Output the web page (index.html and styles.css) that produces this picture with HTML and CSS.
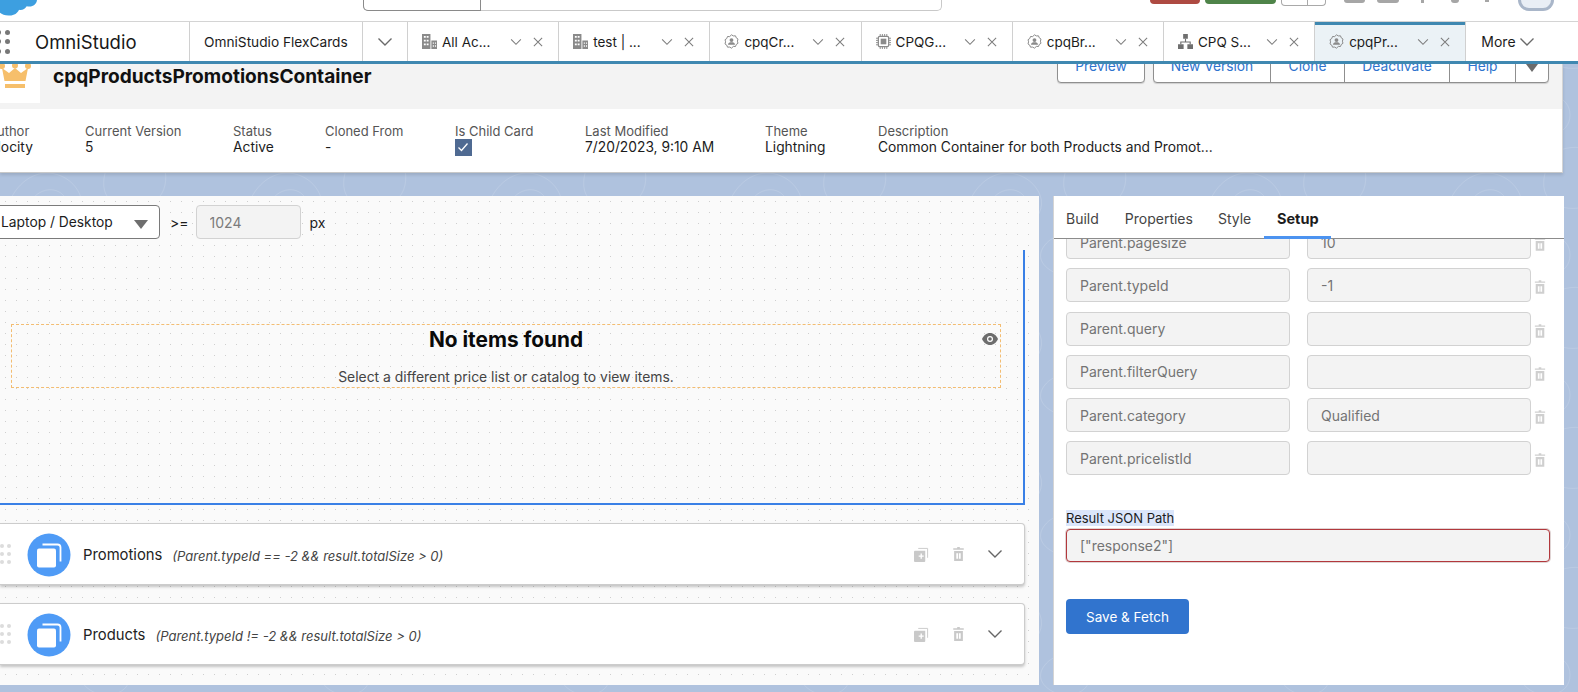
FILE: index.html
```html
<!DOCTYPE html>
<html lang="en">
<head>
    <meta charset="UTF-8">
    <title>cpqProductsPromotionsContainer | OmniStudio</title>
    <link rel="stylesheet" href="styles.css">
</head>
<body>
    <svg class="defs" width="0" height="0">
        <symbol id="i-building" viewBox="0 0 16 16">
            <path fill="#8a8a8a" d="M0 0h9v16H0zM10 7h6v9h-6z"/>
            <path fill="#fff" d="M2 2h2v2H2zM5 2h2v2H5zM2 6h2v2H2zM5 6h2v2H5zM2 10h2v2H2zM5 10h2v2H5zM11.500 9h1.200v1.500h-1.200zM13.800 9H15v1.500h-1.200zM11.500 12h1.200v1.500h-1.200zM13.800 12H15v1.500h-1.200z"/>
        </symbol>
        <symbol id="i-profile" viewBox="0 0 18 18">
            <path fill="none" stroke="#8a8a8a" stroke-width="1.200" d="M9 1l2.200 1.300 2.600-.1.900 2.400 2.100 1.500-.7 2.500.7 2.500-2.100 1.500-.9 2.400-2.600-.1L9 17l-2.200-1.300-2.600.1-.9-2.400-2.100-1.500.7-2.500-.7-2.500 2.100-1.500.9-2.400 2.600.1z"/>
            <circle cx="9" cy="7.300" r="2.300" fill="#8a8a8a"/>
            <path fill="#8a8a8a" d="M4.800 13c0-2.400 2-3 4.200-3s4.200.6 4.200 3z"/>
        </symbol>
        <symbol id="i-chip" viewBox="0 0 16 16">
            <path fill="none" stroke="#8a8a8a" stroke-width="1" d="M4.500 0v3M6.800 0v3M9.200 0v3M11.500 0v3M4.500 13v3M6.800 13v3M9.200 13v3M11.500 13v3M0 4.500h3M0 6.800h3M0 9.200h3M0 11.500h3M13 4.500h3M13 6.800h3M13 9.200h3M13 11.500h3"/>
            <rect x="2.500" y="2.500" width="11" height="11" rx="1.500" fill="#fff" stroke="#8a8a8a" stroke-width="1.300"/>
            <rect x="5" y="5" width="6" height="6" fill="#8a8a8a"/>
        </symbol>
        <symbol id="i-tree" viewBox="0 0 16 16">
            <path fill="#6f6f6f" d="M5.500 0h5v5h-5zM0 11h6v5H0zM10 11h6v5h-6z"/>
            <path fill="none" stroke="#6f6f6f" stroke-width="1.200" d="M8 5v3.500M3 11V8.500h10V11"/>
        </symbol>
        <symbol id="i-chevron" viewBox="0 0 16 16">
            <path fill="none" stroke="currentColor" stroke-width="1.400" d="M1.500 4.500L8 11l6.500-6.500"/>
        </symbol>
        <symbol id="i-close" viewBox="0 0 16 16">
            <path fill="none" stroke="currentColor" stroke-width="1.400" d="M2.500 2.500l11 11M13.500 2.500l-11 11"/>
        </symbol>
        <symbol id="i-trash" viewBox="0 0 14 16">
            <path fill="currentColor" d="M5.500 0h3v1.500H13V3H1V1.500h4.500zM2 4.500h10V16H2z"/>
            <path fill="#fff" d="M4.500 7h2v6.500h-2zM7.500 7h2v6.500h-2z"/>
        </symbol>
        <symbol id="i-clone" viewBox="0 0 16 16">
            <path fill="none" stroke="#c9c9c9" stroke-width="1" d="M4.500 1.500h10v10"/>
            <path fill="#c9c9c9" d="M1 4h11v11a1 1 0 0 1-1 1H1a1 1 0 0 1-1-1V5a1 1 0 0 1 1-1z"/>
            <path fill="#fff" d="M5 9h2V7h1.400v2h2v1.400h-2v2H7v-2H5z"/>
        </symbol>
        <symbol id="i-card" viewBox="0 0 44 44">
            <circle cx="22" cy="22" r="21.500" fill="#4f9bf6"/>
            <path fill="none" stroke="#fff" stroke-width="1.800" d="M15.500 11.500h15a3 3 0 0 1 3 3v14"/>
            <rect x="10" y="15.500" width="19" height="19" rx="2" fill="#fff"/>
        </symbol>
    </svg>

    <div class="topbar">
        <svg class="cloud" viewBox="0 0 38 16" width="38" height="16">
            <path fill="#3d9fe0" d="M0 0h38c-.5 4-3.500 6.500-7.500 6.500-1 0-2 0-2.800-.3-1.600 2.800-4.600 4.300-7.700 3.600C18.500 13.500 14.500 16 9.500 15.500 5 15.200 1.500 14 0 11.500z"/>
        </svg>
        <div class="search">
            <div class="search-scope"></div>
        </div>
        <div class="top-btn top-btn-red"></div>
        <div class="top-btn top-btn-green"></div>
        <div class="top-split"><span></span></div>
        <div class="top-icon top-icon-a"></div>
        <div class="top-icon top-icon-b"></div>
        <div class="top-icon top-dot-a"></div>
        <div class="top-icon top-dot-b"></div>
        <div class="top-icon top-dot-c"></div>
        <div class="avatar"></div>
    </div>

    <div class="tabbar">
        <div class="app">
            <div class="launcher">
                <i></i><i></i><i></i><i></i><i></i><i></i>
            </div>
            <span class="app-name">OmniStudio</span>
        </div>
        <div class="tab tab-home">OmniStudio FlexCards</div>
        <div class="tab tab-menu"><svg class="chev-lg"><use href="#i-chevron"/></svg></div>
        <div class="tab">
            <svg class="tab-icon"><use href="#i-building"/></svg><span class="tab-label">All Ac...</span>
            <svg class="chev"><use href="#i-chevron"/></svg><svg class="close"><use href="#i-close"/></svg>
        </div>
        <div class="tab">
            <svg class="tab-icon"><use href="#i-building"/></svg><span class="tab-label">test | ...</span>
            <svg class="chev"><use href="#i-chevron"/></svg><svg class="close"><use href="#i-close"/></svg>
        </div>
        <div class="tab">
            <svg class="tab-icon"><use href="#i-profile"/></svg><span class="tab-label">cpqCr...</span>
            <svg class="chev"><use href="#i-chevron"/></svg><svg class="close"><use href="#i-close"/></svg>
        </div>
        <div class="tab">
            <svg class="tab-icon"><use href="#i-chip"/></svg><span class="tab-label">CPQG...</span>
            <svg class="chev"><use href="#i-chevron"/></svg><svg class="close"><use href="#i-close"/></svg>
        </div>
        <div class="tab">
            <svg class="tab-icon"><use href="#i-profile"/></svg><span class="tab-label">cpqBr...</span>
            <svg class="chev"><use href="#i-chevron"/></svg><svg class="close"><use href="#i-close"/></svg>
        </div>
        <div class="tab">
            <svg class="tab-icon"><use href="#i-tree"/></svg><span class="tab-label">CPQ S...</span>
            <svg class="chev"><use href="#i-chevron"/></svg><svg class="close"><use href="#i-close"/></svg>
        </div>
        <div class="tab tab-active">
            <svg class="tab-icon"><use href="#i-profile"/></svg><span class="tab-label">cpqPr...</span>
            <svg class="chev"><use href="#i-chevron"/></svg><svg class="close"><use href="#i-close"/></svg>
        </div>
        <div class="tab tab-more">More <svg class="chev-lg"><use href="#i-chevron"/></svg></div>
    </div>

    <div class="record">
        <div class="record-head">
            <div class="record-logo">
                <svg viewBox="0 0 32 26" width="32" height="26">
                    <circle cx="3" cy="3" r="3" fill="#f6bf6b"/>
                    <circle cx="16" cy="2.500" r="3" fill="#f6bf6b"/>
                    <circle cx="29" cy="3" r="3" fill="#f6bf6b"/>
                    <path fill="#f6bf6b" d="M3 5l7 5 6-5 6 5 7-5-2.500 13H5.500z"/>
                    <path fill="#f6bf6b" d="M6 21h20v4H6z"/>
                </svg>
            </div>
            <h1 class="record-title">cpqProductsPromotionsContainer</h1>
            <div class="actions">
                <div class="btn-group"><a class="btn btn-preview">Preview</a></div>
                <div class="btn-group">
                    <a class="btn btn-new">New Version</a>
                    <a class="btn btn-clone">Clone</a>
                    <a class="btn btn-deact">Deactivate</a>
                    <a class="btn btn-help">Help</a>
                    <a class="btn btn-caret"><i class="caret"></i></a>
                </div>
            </div>
        </div>
        <div class="details">
            <div><div class="label">Author</div><div class="value">Vlocity</div></div>
            <div><div class="label">Current Version</div><div class="value">5</div></div>
            <div><div class="label">Status</div><div class="value">Active</div></div>
            <div><div class="label">Cloned From</div><div class="value">-</div></div>
            <div>
                <div class="label">Is Child Card</div>
                <div class="check"><svg viewBox="0 0 16 16" width="16" height="16"><path fill="none" stroke="#fff" stroke-width="1.300" d="M3.500 8.500l3 3 6-7"/></svg></div>
            </div>
            <div><div class="label">Last Modified</div><div class="value">7/20/2023, 9:10 AM</div></div>
            <div><div class="label">Theme</div><div class="value">Lightning</div></div>
            <div><div class="label">Description</div><div class="value">Common Container for both Products and Promot...</div></div>
        </div>
    </div>

    <div class="workspace">
        <div class="stage">
            <div class="toolbar">
                <div class="select">Laptop / Desktop<i class="select-arrow"></i></div>
                <span class="gte">&gt;=</span>
                <input class="size-input" type="text" value="1024" readonly>
                <span class="px">px</span>
            </div>
            <div class="canvas">
                <div class="empty">
                    <h2 class="empty-title">No items found</h2>
                    <p class="empty-text">Select a different price list or catalog to view items.</p>
                    <svg class="eye" viewBox="0 0 16 12" width="16" height="12">
                        <path fill="#6d6d6d" d="M8 0c3.600 0 6.500 2.600 8 6-1.500 3.400-4.400 6-8 6S1.500 9.400 0 6c1.500-3.400 4.400-6 8-6z"/>
                        <circle cx="8" cy="6" r="3" fill="#fff"/>
                        <circle cx="8" cy="6" r="1.800" fill="#6d6d6d"/>
                    </svg>
                </div>
            </div>
            <div class="block">
                <div class="grip"><i></i><i></i><i></i><i></i><i></i><i></i></div>
                <svg class="block-icon"><use href="#i-card"/></svg>
                <span class="block-name">Promotions</span>
                <span class="block-cond">(Parent.typeId == -2 &amp;&amp; result.totalSize &gt; 0)</span>
                <svg class="block-clone"><use href="#i-clone"/></svg>
                <svg class="block-trash"><use href="#i-trash"/></svg>
                <svg class="block-chev"><use href="#i-chevron"/></svg>
            </div>
            <div class="block">
                <div class="grip"><i></i><i></i><i></i><i></i><i></i><i></i></div>
                <svg class="block-icon"><use href="#i-card"/></svg>
                <span class="block-name">Products</span>
                <span class="block-cond">(Parent.typeId != -2 &amp;&amp; result.totalSize &gt; 0)</span>
                <svg class="block-clone"><use href="#i-clone"/></svg>
                <svg class="block-trash"><use href="#i-trash"/></svg>
                <svg class="block-chev"><use href="#i-chevron"/></svg>
            </div>
        </div>

        <div class="side">
            <div class="side-tabs">
                <span class="side-tab side-tab-build">Build</span>
                <span class="side-tab side-tab-props">Properties</span>
                <span class="side-tab side-tab-style">Style</span>
                <span class="side-tab side-tab-active">Setup</span>
            </div>
            <div class="side-body">
                <div class="params">
                    <div class="param">
                        <input type="text" value="Parent.pagesize" readonly><input type="text" value="10" readonly>
                        <svg class="param-trash"><use href="#i-trash"/></svg>
                    </div>
                    <div class="param">
                        <input type="text" value="Parent.typeId" readonly><input type="text" value="-1" readonly>
                        <svg class="param-trash"><use href="#i-trash"/></svg>
                    </div>
                    <div class="param">
                        <input type="text" value="Parent.query" readonly><input type="text" value="" readonly>
                        <svg class="param-trash"><use href="#i-trash"/></svg>
                    </div>
                    <div class="param">
                        <input type="text" value="Parent.filterQuery" readonly><input type="text" value="" readonly>
                        <svg class="param-trash"><use href="#i-trash"/></svg>
                    </div>
                    <div class="param">
                        <input type="text" value="Parent.category" readonly><input type="text" value="Qualified" readonly>
                        <svg class="param-trash"><use href="#i-trash"/></svg>
                    </div>
                    <div class="param">
                        <input type="text" value="Parent.pricelistId" readonly><input type="text" value="" readonly>
                        <svg class="param-trash"><use href="#i-trash"/></svg>
                    </div>
                </div>
                <label class="json-label"><span>Result JSON Path</span></label>
                <input class="json-input" type="text" value='["response2"]' readonly>
                <button class="save-btn">Save &amp; Fetch</button>
            </div>
        </div>
    </div>
</body>
</html>
```

FILE: styles.css
```css
* {
    box-sizing: border-box;
}
html, body {
    margin: 0;
    height: 692px;
    overflow: hidden;
}
body {
    font-family: Inter, "Liberation Sans", sans-serif;
    font-size: 13px;
    color: #1c1c1c;
    background-color: #afc2de;
    background-image: url("data:image/svg+xml,%3Csvg xmlns='http://www.w3.org/2000/svg' width='240' height='140' fill='none' stroke='%23ffffff' stroke-opacity='.13'%3E%3Cpath d='M10 60c20-40 60-30 70-5s-30 50-55 40S0 80 10 60zM30 62c12-18 32-14 36-2s-14 24-26 20-16-8-10-18zM120 10c30-10 50 10 45 35s-40 30-55 15 0-45 10-50zM180 70c20-15 50-5 50 20s-30 35-50 25-15-35 0-45zM90 100c15-10 40-5 40 15s-25 25-40 15-10-22 0-30z'/%3E%3C/svg%3E");
}
.defs {
    display: block;
    height: 0;
}

/* top global header */
.topbar {
    display: flex;
    align-items: flex-start;
    height: 22px;
    background: #fff;
    border-bottom: 1px solid #d4d4d4;
}
.cloud {
    margin-left: -1px;
}
.search {
    width: 579px;
    height: 11px;
    margin-left: 326px;
    border: 1px solid #c9c9c9;
    border-top: none;
    border-radius: 0 0 5px 5px;
}
.search-scope {
    width: 118px;
    height: 11px;
    margin-left: -1px;
    border: 1px solid #8a8a8a;
    border-top: none;
    border-radius: 0 0 0 5px;
}
.top-btn {
    height: 4px;
    border-radius: 0 0 4px 4px;
}
.top-btn-red {
    width: 50px;
    margin-left: 208px;
    background: #ae4a42;
}
.top-btn-green {
    width: 71px;
    margin-left: 5px;
    background: #4f8449;
}
.top-split {
    display: flex;
    justify-content: flex-end;
    width: 45px;
    height: 6px;
    margin-left: 5px;
    border: 1px solid #a9a9a9;
    border-top: none;
    border-radius: 0 0 4px 4px;
}
.top-split span {
    width: 18px;
    border-left: 1px solid #a9a9a9;
}
.top-icon {
    background: #a6a6a6;
}
.top-icon-a {
    width: 21px;
    height: 3px;
    margin-left: 18px;
    border-radius: 0 0 4px 4px;
}
.top-icon-b {
    width: 22px;
    height: 3px;
    margin-left: 12px;
    border-radius: 0 0 8px 8px;
}
.top-dot-a {
    width: 3px;
    height: 3px;
    margin-left: 22px;
}
.top-dot-b {
    width: 8px;
    height: 3px;
    margin-left: 27px;
    border-radius: 0 0 4px 4px;
}
.top-dot-c {
    width: 4px;
    height: 2px;
    margin-left: 26px;
}
.avatar {
    width: 36px;
    height: 11px;
    margin-left: 29px;
    border: 3px solid #a9b6c9;
    border-top: none;
    border-radius: 0 0 18px 18px;
    background: #e9eef5;
}

/* navigation tabs */
.tabbar {
    position: relative;
    z-index: 2;
    display: flex;
    height: 42px;
    background: #fff;
    border-bottom: 3px solid #3f88b1;
}
.app {
    display: flex;
    align-items: center;
    width: 189px;
}
.launcher {
    display: grid;
    grid-template-columns: 4px 4px;
    gap: 4.500px 5px;
    margin-left: -4px;
}
.launcher i {
    width: 5px;
    height: 5px;
    border-radius: 50%;
    background: #777;
}
.app-name {
    margin-left: 26px;
    font-size: 18.500px;
    color: #181818;
}
.tab {
    display: flex;
    align-items: center;
    width: 151.200px;
    padding-left: 14px;
    border-left: 1px solid #d0d0d0;
    font-size: 13.500px;
    white-space: nowrap;
}
.tab-home {
    width: 173px;
    font-size: 13.700px;
}
.tab-menu {
    width: 45px;
    color: #6f6f6f;
}
.tab-active {
    background: #ebf2f6;
    box-shadow: inset 0 3px 0 #3f88b1;
}
.tab-more {
    flex: 1;
    padding-left: 15px;
    border-left: 1px solid #d0d0d0;
    font-size: 14px;
}
.tab-icon {
    flex: none;
    width: 15px;
    height: 15px;
    margin-right: 5px;
}
.tab-label {
    width: 59px;
}
.chev, .close {
    flex: none;
    width: 12px;
    height: 12px;
    color: #7d7d7d;
}
.chev {
    margin-left: 9px;
}
.close {
    margin-left: 10px;
}
.chev-lg {
    width: 16px;
    height: 16px;
    color: #6a6a6a;
}
.tab-more .chev-lg {
    margin-left: 3px;
}

/* record header */
.record {
    width: 1563px;
    height: 109px;
    background: #fff;
    border-bottom: 1px solid #c8c8c8;
    border-right: 1px solid #d4d4d4;
    box-shadow: 0 2px 3px rgba(0, 0, 0, .12);
}
.record-head {
    display: flex;
    height: 45px;
    background: #f3f3f3;
}
.record-logo {
    width: 40px;
    height: 39px;
    background: #fff;
    overflow: hidden;
}
.record-logo svg {
    display: block;
    margin-top: -1px;
    margin-left: -1px;
}
.record-title {
    margin: 1px 0 0 13px;
    font-size: 19.100px;
    font-weight: 700;
    line-height: 22px;
    color: #111;
}
.actions {
    display: flex;
    gap: 8px;
    margin-left: auto;
    margin-right: 13px;
}
.btn-group {
    display: flex;
    height: 34px;
    margin-top: -15px;
    background: #fff;
    border: 1px solid #8f8f8f;
    border-radius: 4px;
    box-shadow: 0 1px 1px rgba(0, 0, 0, .15);
}
.btn {
    display: block;
    padding-top: 8px;
    text-align: center;
    font-size: 13.800px;
    color: #2f73ce;
    border-left: 1px solid #8f8f8f;
}
.btn:first-child {
    border-left: none;
}
.btn-preview { width: 86px; }
.btn-new { width: 116px; }
.btn-clone { width: 74px; }
.btn-deact { width: 105px; }
.btn-help { width: 66px; }
.btn-caret { width: 33px; }
.caret {
    display: block;
    width: 0;
    margin: 6px auto 0;
    border: 6px solid transparent;
    border-top: 8px solid #6b6b6b;
    border-bottom: none;
}
.details {
    display: grid;
    grid-template-columns: 97px 148px 92px 130px 130px 180px 113px 1fr;
    margin-left: -12px;
    padding-top: 14px;
    font-size: 13px;
}
.label {
    line-height: 16px;
    color: #555;
}
.value {
    font-size: 13.800px;
    line-height: 17px;
    color: #1c1c1c;
}
.check {
    width: 17px;
    height: 17px;
    background: #4f6a92;
}
.check svg {
    display: block;
}

/* card designer */
.workspace {
    display: flex;
    gap: 14px;
    margin-top: 23px;
    width: 1564px;
    height: 489px;
}
.stage {
    flex: none;
    width: 1039px;
    padding-right: 14px;
    padding-top: 9px;
    background-color: #fafafa;
    background-image: radial-gradient(circle, #cfcfcf .7px, transparent 1px);
    background-size: 11px 11px;
}
.toolbar {
    display: flex;
    align-items: center;
    height: 34px;
}
.select {
    position: relative;
    width: 173px;
    height: 34px;
    margin-left: -13px;
    padding: 8px 0 0 13px;
    background: #fff;
    border: 1px solid #7a7a7a;
    border-radius: 4px;
    font-size: 13.800px;
}
.select-arrow {
    position: absolute;
    top: 14px;
    right: 11px;
    border: 7px solid transparent;
    border-top: 9px solid #6e6e6e;
    border-bottom: none;
}
.gte {
    margin-left: 10px;
    font-size: 14px;
}
.size-input {
    width: 105px;
    height: 34px;
    margin-left: 7px;
    padding-left: 13px;
    font: 14px Inter, sans-serif;
    color: #7b7b7b;
    background: #f3f3f3;
    border: 1px solid #d2d2d2;
    border-radius: 4px;
    outline: none;
}
.px {
    margin-left: 9px;
    font-size: 14px;
}
.canvas {
    height: 255px;
    margin-top: 11px;
    padding: 74px 22px 0 11px;
    border-right: 2px solid #3a80e6;
    border-bottom: 2px solid #3a80e6;
}
.empty {
    position: relative;
    height: 64px;
    border: 1px dashed #f3bd72;
    text-align: center;
}
.empty-title {
    margin: 2px 0 0;
    font-size: 20.800px;
    line-height: 26px;
    font-weight: 700;
    color: #0a0a0a;
}
.empty-text {
    margin: 16px 0 0;
    font-size: 13.900px;
    line-height: 16px;
    color: #444;
}
.eye {
    position: absolute;
    top: 8px;
    right: 2px;
}
.block {
    display: flex;
    align-items: center;
    height: 62px;
    margin-top: 18px;
    background: #fff;
    border: 1px solid #ccc;
    border-left: none;
    border-radius: 0 4px 4px 0;
    box-shadow: 0 2px 3px rgba(0, 0, 0, .22);
}
.grip {
    display: grid;
    grid-template-columns: repeat(2, 4px);
    gap: 4px 3px;
    width: 27px;
}
.grip i {
    width: 4px;
    height: 4px;
    background: #dcdcdc;
    border-radius: 50%;
}
.block-icon {
    width: 44px;
    height: 44px;
    margin-top: 1px;
}
.block-name {
    margin: 2px 0 0 12px;
    font-size: 14.800px;
    color: #222;
}
.block-cond {
    margin: 3px 0 0 10px;
    font-size: 13px;
    font-style: italic;
    color: #444;
}
.block-clone {
    width: 15px;
    height: 15px;
    margin-left: auto;
}
.block-trash {
    width: 13px;
    height: 14px;
    margin-left: 23px;
    color: #c9c9c9;
}
.block-chev {
    width: 16px;
    height: 16px;
    margin-left: 22px;
    margin-right: 21px;
    color: #666;
}

/* setup panel */
.side {
    flex: 1;
    min-width: 0;
    background: #fff;
    border-left: 1px solid #d4d4d4;
}
.side-tabs {
    display: flex;
    height: 43px;
    border-bottom: 1px solid #8c8c8c;
    font-size: 14px;
    color: #444;
}
.side-tab {
    padding-top: 14px;
}
.side-tab-build {
    margin-left: 12px;
}
.side-tab-props {
    margin-left: 26px;
}
.side-tab-style {
    margin-left: 25px;
}
.side-tab-active {
    width: 67px;
    height: 43px;
    margin-left: 13px;
    text-align: center;
    font-size: 14.500px;
    font-weight: 700;
    color: #1c1c1c;
    border-bottom: 3px solid #4c93f0;
}
.side-body {
    height: 446px;
    padding: 0 12px;
    overflow: hidden;
}
.params {
    display: flex;
    flex-direction: column;
    gap: 9.300px;
    margin-top: -14px;
}
.param {
    display: flex;
    align-items: center;
    gap: 17px;
}
.param input {
    width: 224px;
    height: 34px;
    padding-left: 13px;
    font: 14px Inter, sans-serif;
    color: #747474;
    background: #f3f3f3;
    border: 1px solid #d2d2d2;
    border-radius: 4px;
    outline: none;
}
.param-trash {
    width: 12px;
    height: 14px;
    margin: 4px 0 0 -14px;
    color: #cfcfcf;
}
.json-label {
    display: block;
    margin-top: 36px;
    font-size: 13px;
    line-height: 15px;
}
.json-label span {
    background: #dbe6fb;
}
.json-input {
    display: block;
    width: 484px;
    height: 33px;
    margin-top: 3px;
    padding-left: 13px;
    font: 14px Inter, sans-serif;
    color: #747474;
    background: #f3f3f3;
    border: 1px solid #b2383c;
    border-radius: 4px;
    box-shadow: 0 0 0 1px #e0d4d4;
    outline: none;
}
.save-btn {
    display: block;
    width: 123px;
    height: 35px;
    margin-top: 37px;
    font: 13.500px Inter, sans-serif;
    color: #fff;
    background: #3174ce;
    border: none;
    border-radius: 4px;
}
```
